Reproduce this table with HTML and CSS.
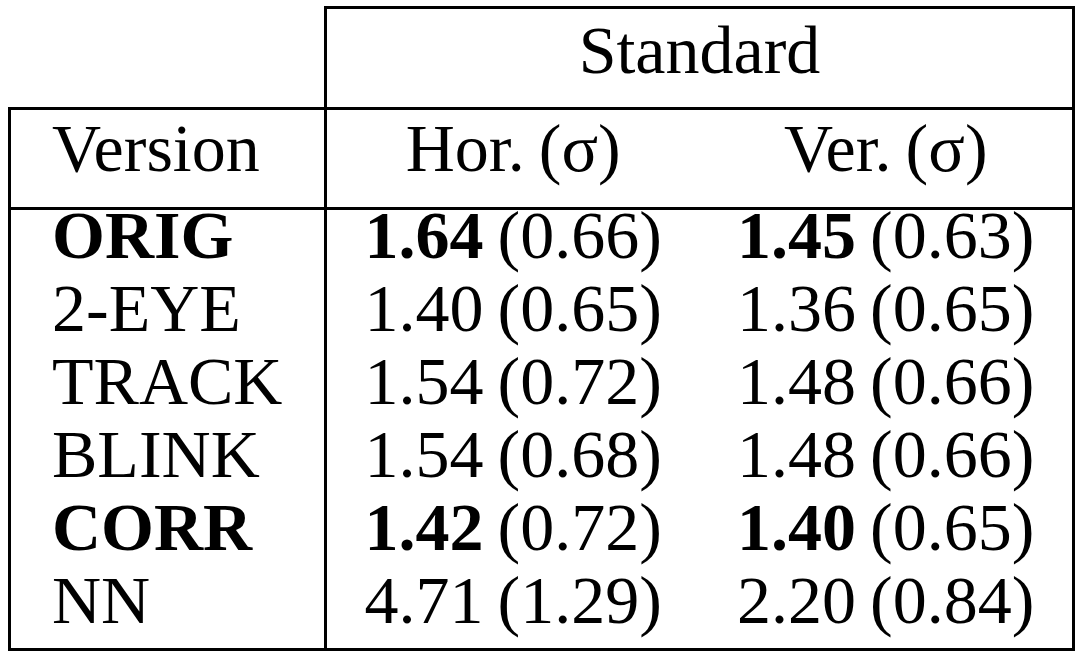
FILE: index.html
```html
<!DOCTYPE html>
<html lang="en">
<head>
<meta charset="utf-8">
<title>Standard deviation table</title>
<link rel="stylesheet" href="styles.css">
</head>
<body>
<table class="results">
  <colgroup>
    <col class="col-version">
    <col class="col-value">
    <col class="col-value">
  </colgroup>
  <thead>
    <tr class="group-row">
      <th class="blank"></th>
      <th class="group" colspan="2">Standard</th>
    </tr>
    <tr class="head-row">
      <th class="label">Version</th>
      <th class="value">Hor. (σ)</th>
      <th class="value last">Ver. (σ)</th>
    </tr>
  </thead>
  <tbody>
    <tr>
      <td class="label"><b>ORIG</b></td>
      <td class="value"><b>1.64</b> (0.66)</td>
      <td class="value last"><b>1.45</b> (0.63)</td>
    </tr>
    <tr>
      <td class="label">2-EYE</td>
      <td class="value">1.40 (0.65)</td>
      <td class="value last">1.36 (0.65)</td>
    </tr>
    <tr>
      <td class="label">TRACK</td>
      <td class="value">1.54 (0.72)</td>
      <td class="value last">1.48 (0.66)</td>
    </tr>
    <tr>
      <td class="label">BLINK</td>
      <td class="value">1.54 (0.68)</td>
      <td class="value last">1.48 (0.66)</td>
    </tr>
    <tr>
      <td class="label"><b>CORR</b></td>
      <td class="value"><b>1.42</b> (0.72)</td>
      <td class="value last"><b>1.40</b> (0.65)</td>
    </tr>
    <tr class="final">
      <td class="label">NN</td>
      <td class="value">4.71 (1.29)</td>
      <td class="value last">2.20 (0.84)</td>
    </tr>
  </tbody>
</table>
</body>
</html>
```
FILE: styles.css
```css
html, body {
  margin: 0;
  padding: 0;
  background: #ffffff;
}

body {
  padding: 6px 0 0 8px;
  font-family: "Liberation Serif", "Times New Roman", serif;
  color: #000000;
}

.results {
  border-collapse: collapse;
  table-layout: fixed;
  width: 1067px;
  font-size: 68px;
  line-height: 50px;
}

.col-version { width: 316px; }
.col-value { width: 374px; }

.results th,
.results td {
  font-weight: normal;
  padding: 0;
  vertical-align: top;
  white-space: nowrap;
}

.results b {
  font-weight: bold;
}

.results .blank {
  border: none;
}

.results .group {
  text-align: center;
  border: 3px solid #000;
  padding: 16px 0 32px 0;
}

.results .head-row th {
  padding-top: 13px;
  padding-bottom: 34px;
  border-top: 3px solid #000;
  border-bottom: 3px solid #000;
}

.results .label {
  text-align: left;
  padding-left: 41px;
  border-left: 3px solid #000;
  border-right: 3px solid #000;
}

.results .value {
  text-align: center;
  word-spacing: -3px;
}

.results .last {
  border-right: 3px solid #000;
}

.results tbody td {
  padding-top: 0;
  padding-bottom: 23px;
}

.results tbody tr.final td {
  border-bottom: 3px solid #000;
}
```
